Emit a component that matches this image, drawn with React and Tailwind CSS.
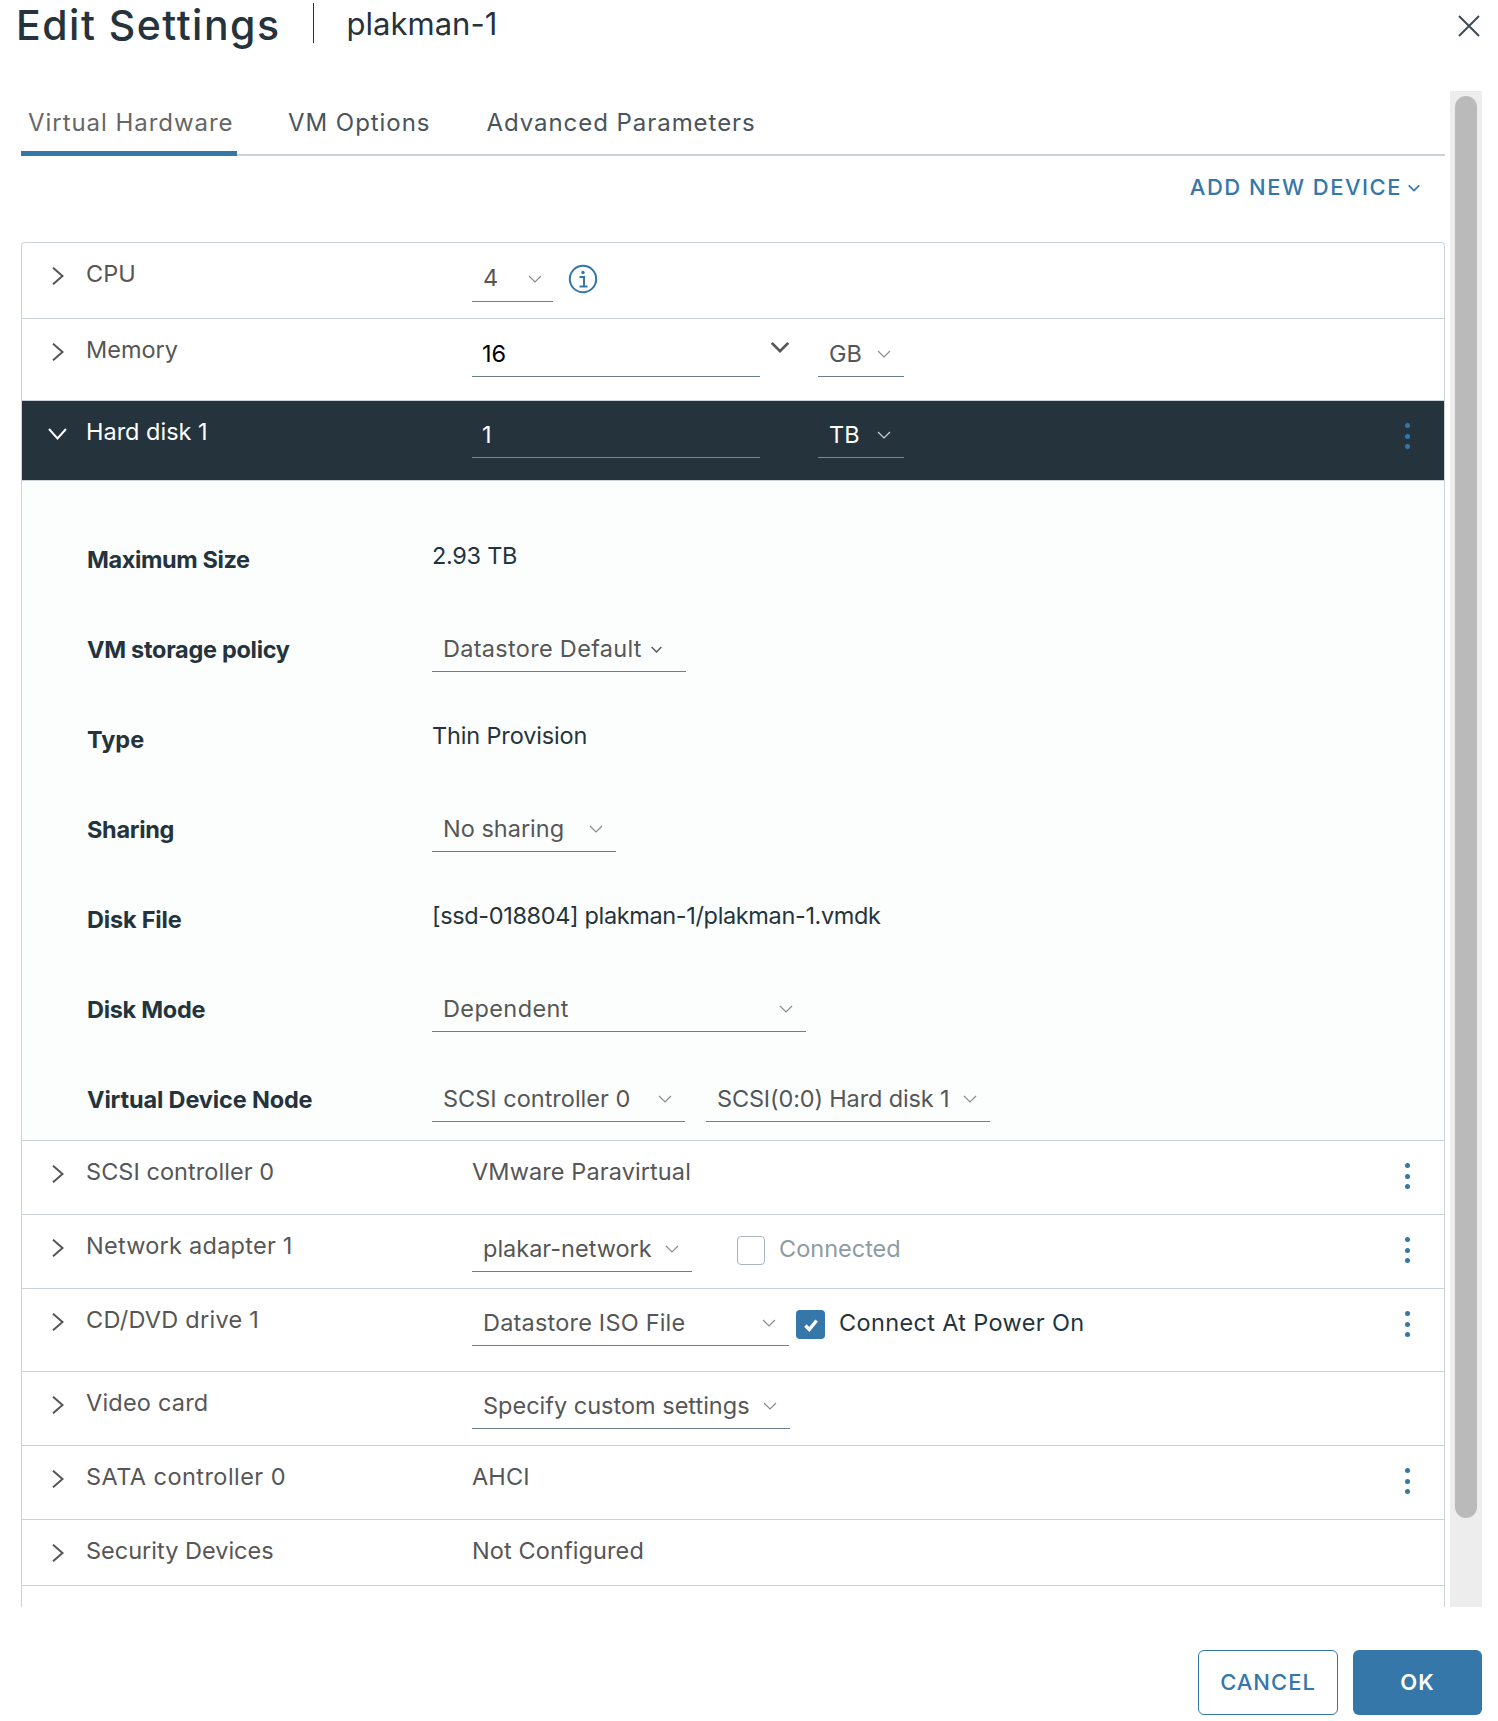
import React from "react";

const F = "font-['Inter','Liberation_Sans',sans-serif]";

function Chev({ dir = "down", className = "", size = 14, sw = 1.6 }) {
  const d = dir === "down" ? "M2 5 L8 11 L14 5" : "M5 2 L11 8 L5 14";
  return (
    <svg viewBox="0 0 16 16" width={size} height={size} fill="none" stroke="currentColor" strokeWidth={sw} className={className}>
      <path d={d} />
    </svg>
  );
}

function Dots({ className = "text-[#3577a9]" }) {
  return (
    <div className={`ml-auto mr-[34px] mt-[22px] flex flex-col gap-[5.5px] ${className}`}>
      <span className="w-[5px] h-[5px] rounded-full bg-current" />
      <span className="w-[5px] h-[5px] rounded-full bg-current" />
      <span className="w-[5px] h-[5px] rounded-full bg-current" />
    </div>
  );
}

function Select({ w, text, dark, textCls = "text-[#565656]", chevCls = "text-[#8c8c8c]", className = "", pr = "pr-[12px]", track = "", chevSize = 16, chevSw = 1.2 }) {
  return (
    <div className={`${w} h-[47px] flex items-center justify-between pl-[11px] ${pr} border-b ${dark ? "border-[#7a8790]" : "border-[#6f7e87]"} ${className}`}>
      <span className={`text-[23.5px] leading-none whitespace-nowrap pt-[2px] ${track} ${textCls}`}>{text}</span>
      <Chev size={chevSize} sw={chevSw} className={`shrink-0 mt-[2px] ${chevCls}`} />
    </div>
  );
}

function Row({ label, h, dark, open, children, last, track = "" }) {
  return (
    <div className={`flex ${h} ${last ? "" : "border-b border-[#ccd3d8]"} ${dark ? "bg-[#25333d]" : ""}`}>
      <div className={`w-[47px] shrink-0 ${open ? "pl-[26px] pt-[27px]" : "pl-[30px] pt-[24px]"}`}>
        {open ? (
          <svg viewBox="0 0 19 12" width="19" height="12" fill="none" stroke="white" strokeWidth="2"><path d="M1 1 L9.5 10.5 L18 1" /></svg>
        ) : (
          <svg viewBox="0 0 12 18" width="12" height="18" fill="none" stroke="#565656" strokeWidth="2"><path d="M1 0.7 L10.5 9 L1 17.3" /></svg>
        )}
      </div>
      <div className={`w-[403px] shrink-0 pl-[17px] pt-[16px] h-[46px] text-[23.5px] leading-[30px] ${track} ${dark ? "text-white" : "text-[#565656]"}`}>{label}</div>
      <div className="flex-1 flex items-start min-w-0">{children}</div>
    </div>
  );
}

function Plain({ children }) {
  return <div className="pt-[16px] text-[23.5px] leading-[30px] text-[#565656] tracking-[0.1px]">{children}</div>;
}

function Detail({ label, h = "h-[90px]", children, track = "" }) {
  return (
    <div className={`flex ${h}`}>
      <div className={`w-[410px] shrink-0 pl-[65px] pt-[10px] text-[23.5px] leading-[30px] font-bold text-[#25333d] ${track}`}>{label}</div>
      <div className="flex-1 flex items-start gap-[21px]">{children}</div>
    </div>
  );
}

export default function App() {
  return (
    <div className={`w-[1498px] h-[1721px] bg-white overflow-hidden flex flex-col ${F}`}>
      {/* header */}
      <div className="h-[91px] shrink-0 flex items-start">
        <h1 className="ml-[16px] mt-[1px] text-[41px] leading-[48px] font-medium text-[#25333d] tracking-[1.5px]">Edit Settings</h1>
        <div className="ml-[32px] mt-[3px] w-px h-[40px] bg-[#25333d]" />
        <div className="ml-[33px] mt-[4px] text-[31px] leading-[40px] text-[#25333d]">plakman-1</div>
        <button className="ml-auto mr-[18px] mt-[15px] text-[#3e4b52]">
          <svg viewBox="0 0 22 22" width="22" height="22" fill="none" stroke="currentColor" strokeWidth="2"><path d="M1 1 L21 21 M21 1 L1 21" /></svg>
        </button>
      </div>

      {/* body */}
      <div className="h-[1516px] shrink-0 flex">
        <div className="w-[1450px] shrink-0 overflow-hidden pl-[21px] pr-[5px]">
          {/* tabs */}
          <div className="h-[65px] flex items-start border-b-2 border-[#ccd3d8] gap-[51px] tracking-[0.95px]">
            <div className="h-[65px] w-[216px] -mb-[2px] border-b-[5px] border-[#3577a9] pl-[7px] pt-[17px] text-[24px] leading-[30px] text-[#666] whitespace-nowrap">Virtual Hardware</div>
            <div className="pt-[17px] text-[24px] leading-[30px] text-[#49545c]">VM Options</div>
            <div className="pt-[17px] text-[24px] leading-[30px] text-[#49545c] ml-[5px]">Advanced Parameters</div>
          </div>
          {/* add */}
          <div className="h-[86px] flex justify-end items-start pt-[16px] pr-[24px] text-[#3577a9]">
            <span className="text-[22px] leading-[30px] font-medium tracking-[1.5px] whitespace-nowrap">ADD NEW DEVICE</span>
            <Chev size={14} sw={2} className="ml-[5px] mt-[9px]" />
          </div>
          {/* card */}
          <div className="border border-[#ccd3d8] rounded-t-[4px] border-b-0">
            <Row label="CPU" h="h-[76px]">
              <div className="mt-[12px] w-[81px] h-[47px] flex items-center justify-between pl-[11px] pr-[10px] border-b border-[#6f7e87]">
                <span className="text-[23.5px] leading-none text-[#565656]">4</span>
                <Chev size={16} sw={1.2} className="text-[#8c8c8c] mt-[2px]" />
              </div>
              <svg viewBox="0 0 30 30" width="30" height="30" className="ml-[15px] mt-[21px] text-[#3577a9]" fill="none" stroke="currentColor">
                <circle cx="15" cy="15" r="13.2" strokeWidth="2" />
                <path d="M11.5 13 H16 V22 M11.5 22.5 H19.5" strokeWidth="2" />
                <circle cx="15" cy="8.5" r="1.7" fill="currentColor" stroke="none" />
              </svg>
            </Row>
            <Row label="Memory" h="h-[82px]">
              <div className="mt-[12px] w-[288px] h-[46px] flex items-center pl-[10px] border-b border-[#6f7e87] text-[23.5px] leading-none text-black">16</div>
              <Chev size={22} sw={2} className="ml-[9px] mt-[17px] text-[#565656]" />
              <Select w="w-[86px]" text="GB" className="ml-[27px] mt-[11px]" pr="pr-[12px]" />
            </Row>
            <Row label="Hard disk 1" h="h-[80px]" dark open>
              <div className="mt-[11px] w-[288px] h-[46px] flex items-center pl-[10px] border-b border-[#7a8790] text-[23.5px] leading-none text-white">1</div>
              <div className="w-[58px] shrink-0" />
              <Select w="w-[86px]" text="TB" dark textCls="text-white" chevCls="text-[#cfd6da]" className="mt-[10px]" pr="pr-[12px]" />
              <Dots />
            </Row>
            <div className="bg-[#fbfefd] border-b border-[#ccd3d8] pt-[54px] h-[660px]">
              <Detail label="Maximum Size" track="-tracking-[0.4px]"><div className="pt-[6px] text-[23.5px] leading-[30px] text-[#25333d] -tracking-[0.3px]">2.93 TB</div></Detail>
              <Detail label="VM storage policy" track="-tracking-[0.3px]"><Select w="w-[254px]" text="Datastore Default" pr="pr-[23px]" track="tracking-[0.3px]" chevSize={13} chevSw={1.8} chevCls="text-[#565656]" /></Detail>
              <Detail label="Type"><div className="pt-[6px] text-[23.5px] leading-[30px] text-[#25333d] -tracking-[0.15px]">Thin Provision</div></Detail>
              <Detail label="Sharing" track="-tracking-[0.3px]"><Select w="w-[184px]" text="No sharing" /></Detail>
              <Detail label="Disk File" track="-tracking-[0.2px]"><div className="pt-[6px] text-[23.5px] leading-[30px] text-[#25333d] whitespace-nowrap -tracking-[0.36px]">[ssd-018804] plakman-1/plakman-1.vmdk</div></Detail>
              <Detail label="Disk Mode" track="-tracking-[0.3px]"><Select w="w-[374px]" text="Dependent" track="tracking-[0.4px]" /></Detail>
              <Detail label="Virtual Device Node" h="h-[65px]" track="-tracking-[0.15px]">
                <Select w="w-[253px]" text="SCSI controller 0" />
                <Select w="w-[284px]" text="SCSI(0:0) Hard disk 1" track="-tracking-[0.15px]" />
              </Detail>
            </div>
            <Row label="SCSI controller 0" h="h-[74px]" track="tracking-[0.05px]"><Plain>VMware Paravirtual</Plain><Dots /></Row>
            <Row label="Network adapter 1" h="h-[74px]" track="tracking-[0.25px]">
              <Select w="w-[220px]" text="plakar-network" className="mt-[10px]" />
              <span className="ml-[45px] mt-[21px] w-[28px] h-[29px] border border-[#a9b4bb] rounded-[4px] bg-white" />
              <span className="ml-[14px] mt-[19px] text-[23.5px] leading-[30px] text-[#8c9ba5]">Connected</span>
              <Dots />
            </Row>
            <Row label="CD/DVD drive 1" h="h-[83px]" track="tracking-[0.25px]">
              <Select w="w-[317px]" text="Datastore ISO File" className="mt-[10px]" track="tracking-[0.2px]" />
              <span className="ml-[7px] mt-[21px] w-[29px] h-[29px] rounded-[4px] bg-[#3577a9] flex items-center justify-center">
                <svg viewBox="0 0 16 16" width="18" height="18" fill="none" stroke="white" strokeWidth="3"><path d="M3 8.5 L6.5 12 L13 4" /></svg>
              </span>
              <span className="ml-[14px] mt-[19px] text-[23.5px] leading-[30px] text-[#25333d] whitespace-nowrap tracking-[0.35px]">Connect At Power On</span>
              <Dots />
            </Row>
            <Row label="Video card" h="h-[74px]" track="tracking-[0.2px]">
              <Select w="w-[318px]" text="Specify custom settings" className="mt-[10px]" />
            </Row>
            <Row label="SATA controller 0" h="h-[74px]" track="tracking-[0.45px]"><Plain>AHCI</Plain><Dots /></Row>
            <Row label="Security Devices" h="h-[66px]"><Plain>Not Configured</Plain></Row>
            <div className="h-[40px]" />
          </div>
        </div>
        {/* scrollbar */}
        <div className="w-[32px] shrink-0 bg-[#ededed] pt-[5px] px-[5px]">
          <div className="h-[1422px] rounded-full bg-[#bababa]" />
        </div>
      </div>

      {/* footer */}
      <div className="flex-1 flex justify-end items-start pt-[43px] pr-[16px] gap-[15px]">
        <button className="w-[140px] h-[65px] rounded-[6px] border border-[#3577a9] text-[#3577a9] text-[22px] font-medium tracking-[1px]">CANCEL</button>
        <button className="w-[129px] h-[65px] rounded-[6px] bg-[#3577a9] text-white text-[22px] font-semibold tracking-[1px]">OK</button>
      </div>
    </div>
  );
}
